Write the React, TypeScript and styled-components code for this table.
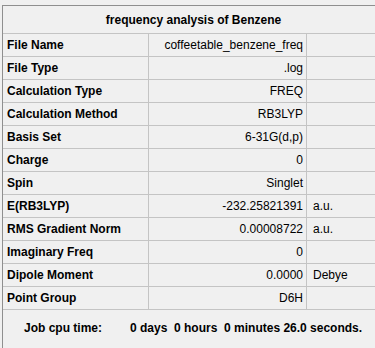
import React from 'react';
import styled, { createGlobalStyle } from 'styled-components';

interface ResultRow {
  label: string;
  value: string;
  unit?: string;
}

const rows: ResultRow[] = [
  { label: 'File Name', value: 'coffeetable_benzene_freq' },
  { label: 'File Type', value: '.log' },
  { label: 'Calculation Type', value: 'FREQ' },
  { label: 'Calculation Method', value: 'RB3LYP' },
  { label: 'Basis Set', value: '6-31G(d,p)' },
  { label: 'Charge', value: '0' },
  { label: 'Spin', value: 'Singlet' },
  { label: 'E(RB3LYP)', value: '-232.25821391', unit: 'a.u.' },
  { label: 'RMS Gradient Norm', value: '0.00008722', unit: 'a.u.' },
  { label: 'Imaginary Freq', value: '0' },
  { label: 'Dipole Moment', value: '0.0000', unit: 'Debye' },
  { label: 'Point Group', value: 'D6H' },
];

const GlobalStyle = createGlobalStyle`
  html, body {
    margin: 0;
    padding: 0;
    background: #f0f0f0;
    overflow: hidden;
  }
  body {
    font-family: "Liberation Sans", Arial, sans-serif;
    color: #000;
  }
`;

// summary panel: only the top and left edges fall inside the window
const Panel = styled.div`
  box-sizing: border-box;
  margin: 5px 0 0 2px;
  width: 373px;
  height: 343px;
  border-top: 1px solid #8f8f8f;
  border-left: 1px solid #8f8f8f;
  background: #f0f0f0;
`;

const Title = styled.div`
  height: 27px;
  padding-left: 9px;
  border-bottom: 1px solid #c4c4c4;
  display: flex;
  align-items: center;
  justify-content: center;
  font-size: 12px;
  font-weight: 700;
`;

const Row = styled.div`
  display: grid;
  grid-template-columns: 146px 158px 1fr;
  height: 22px;
  border-bottom: 1px solid #c4c4c4;
`;

const Cell = styled.div<{ $align?: 'left' | 'right' }>`
  display: flex;
  align-items: center;
  justify-content: ${(p) => (p.$align === 'right' ? 'flex-end' : 'flex-start')};
  padding: 0 3px 0 4px;
  font-size: 12px;
  white-space: nowrap;
  overflow: hidden;
`;

const Label = styled(Cell)`
  font-weight: 700;
  border-right: 1px solid #c4c4c4;
`;

const Value = styled(Cell)`
  border-right: 1px solid #c4c4c4;
`;

const Unit = styled(Cell)`
  padding-left: 6px;
`;

const Footer = styled.div`
  display: flex;
  align-items: center;
  height: 36px;
  padding-left: 21px;
  font-size: 12px;
  font-weight: 700;
  white-space: pre;
`;

const CpuLabel = styled.span`
  width: 106px;
`;

export default function App() {
  return (
    <>
      <GlobalStyle />
      <Panel>
        <Title>frequency analysis of Benzene</Title>
        {rows.map((r) => (
          <Row key={r.label}>
            <Label>{r.label}</Label>
            <Value $align="right">{r.value}</Value>
            <Unit>{r.unit ?? ''}</Unit>
          </Row>
        ))}
        <Footer>
          <CpuLabel>Job cpu time:</CpuLabel>
          <span>0 days  0 hours  0 minutes 26.0 seconds.</span>
        </Footer>
      </Panel>
    </>
  );
}
